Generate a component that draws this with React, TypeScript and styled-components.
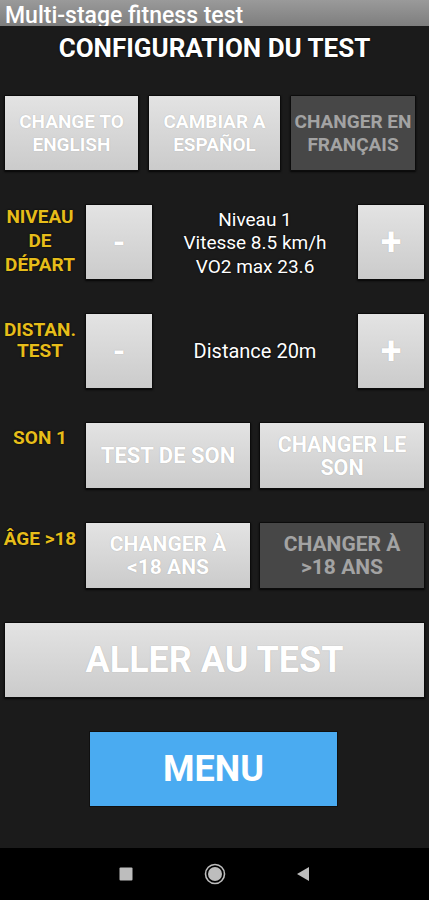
import styled, { createGlobalStyle } from "styled-components";

const GlobalStyle = createGlobalStyle`
  html, body {
    margin: 0;
    padding: 0;
    background: #1b1b1b;
  }
  body {
    font-family: Roboto, "Liberation Sans", sans-serif;
  }
`;

const Screen = styled.div`
  width: 429px;
  height: 900px;
  display: flex;
  flex-direction: column;
  background: #1b1b1b;
  overflow: hidden;
`;

const TitleBar = styled.div`
  height: 26px;
  flex: none;
  overflow: hidden;
  background: linear-gradient(#9a9a9a, #7e7e7e);
  color: #fff;
  font-size: 23px;
  font-weight: 500;
  line-height: 26px;
  padding: 3px 0 0 5px;
  box-sizing: border-box;
  white-space: nowrap;
`;

const Content = styled.div`
  flex: 1;
  display: flex;
  flex-direction: column;
  gap: 33px;
`;

const Heading = styled.h1`
  margin: 0;
  padding-top: 8px;
  font-size: 26px;
  line-height: 28px;
  font-weight: 700;
  color: #fff;
  text-align: center;
  text-shadow: 0 0 2px #000;
`;

const LangRow = styled.div`
  display: grid;
  grid-template-columns: 135px 133px 126px;
  column-gap: 9px;
  padding-left: 4px;
  height: 76px;
`;

const Btn = styled.button<{ $dim?: boolean; $size?: number }>`
  margin: 0;
  padding: 0 2px;
  border: 1px solid #0c0c0c;
  border-radius: 1px;
  box-shadow: 0 1px 2px rgba(0, 0, 0, 0.8);
  background: ${({ $dim }) =>
    $dim ? "#474747" : "linear-gradient(#e3e3e3, #cbcbcb)"};
  color: ${({ $dim }) => ($dim ? "#a3a3a3" : "#fff")};
  font-family: Roboto, "Liberation Sans", sans-serif;
  font-weight: 700;
  font-size: ${({ $size }) => $size ?? 19}px;
  line-height: 23px;
  text-shadow: ${({ $dim }) => ($dim ? "none" : "0 0 1px rgba(0,0,0,0.25)")};
  display: flex;
  align-items: center;
  justify-content: center;
  text-align: center;
`;

const StepRow = styled.div`
  display: grid;
  grid-template-columns: 85px 68px 1fr 68px;
  padding-right: 4px;
  height: 76px;
`;

const ChoiceRow = styled.div`
  display: grid;
  grid-template-columns: 85px 1fr;
  padding-right: 4px;
  height: 67px;
`;

const Pair = styled.div`
  display: grid;
  grid-template-columns: 1fr 1fr;
  column-gap: 8px;
`;

const Label = styled.div<{ $top: number; $lh: number }>`
  padding: ${({ $top }) => $top}px 5px 0 0;
  color: #e6bd1a;
  font-weight: 700;
  font-size: 19px;
  line-height: ${({ $lh }) => $lh}px;
  text-align: center;
  text-shadow: 0 0 2px #000;
`;

const Info = styled.div<{ $size?: number }>`
  display: flex;
  flex-direction: column;
  align-items: center;
  justify-content: center;
  color: #fff;
  font-size: ${({ $size }) => $size ?? 19}px;
  line-height: 23.5px;
  padding-top: 2px;
  text-shadow: 0 0 2px #000;
`;

const GoBtn = styled(Btn)`
  margin: 0 4px;
  height: 76px;
  font-size: 36px;
`;

const MenuBtn = styled.button`
  align-self: flex-start;
  margin: 0 0 0 89px;
  width: 249px;
  height: 76px;
  border: 1px solid #101010;
  background: #4aabf1;
  color: #fff;
  font-family: Roboto, "Liberation Sans", sans-serif;
  font-weight: 700;
  font-size: 36px;
`;

const NavBar = styled.div`
  height: 52px;
  flex: none;
  background: #000;
  display: flex;
  align-items: center;
  padding-left: 119px;
`;

const NavIcon = styled.svg<{ $gap?: number }>`
  display: block;
  margin-right: ${({ $gap }) => $gap ?? 0}px;
`;

export default function App() {
  return (
    <>
      <GlobalStyle />
      <Screen>
        <TitleBar>Multi-stage fitness test</TitleBar>
        <Content>
          <Heading>CONFIGURATION DU TEST</Heading>
          <LangRow>
            <Btn>CHANGE TO<br />ENGLISH</Btn>
            <Btn>CAMBIAR A<br />ESPAÑOL</Btn>
            <Btn $dim>CHANGER EN<br />FRANÇAIS</Btn>
          </LangRow>
          <StepRow>
            <Label $top={1} $lh={24}>NIVEAU<br />DE<br />DÉPART</Label>
            <Btn $size={32}>-</Btn>
            <Info>
              <span>Niveau 1</span>
              <span>Vitesse 8.5 km/h</span>
              <span>VO2 max 23.6</span>
            </Info>
            <Btn $size={38}>+</Btn>
          </StepRow>
          <StepRow>
            <Label $top={6} $lh={21}>DISTAN.<br />TEST</Label>
            <Btn $size={32}>-</Btn>
            <Info $size={20}>Distance 20m</Info>
            <Btn $size={38}>+</Btn>
          </StepRow>
          <ChoiceRow>
            <Label $top={5} $lh={21}>SON 1</Label>
            <Pair>
              <Btn $size={22}>TEST DE SON</Btn>
              <Btn $size={21.5}>CHANGER LE<br />SON</Btn>
            </Pair>
          </ChoiceRow>
          <ChoiceRow>
            <Label $top={6} $lh={21}>ÂGE &gt;18</Label>
            <Pair>
              <Btn $size={21}>CHANGER À<br />&lt;18 ANS</Btn>
              <Btn $dim $size={21}>CHANGER À<br />&gt;18 ANS</Btn>
            </Pair>
          </ChoiceRow>
          <GoBtn>ALLER AU TEST</GoBtn>
          <MenuBtn>MENU</MenuBtn>
        </Content>
        <NavBar>
          <NavIcon $gap={71} width="14" height="14" viewBox="0 0 14 14">
            <rect x="0.5" y="0.5" width="13" height="13" rx="1" fill="#bdbdbd" />
          </NavIcon>
          <NavIcon $gap={70} width="22" height="22" viewBox="0 0 22 22">
            <circle cx="11" cy="11" r="9.5" fill="none" stroke="#bdbdbd" strokeWidth="1.6" />
            <circle cx="11" cy="11" r="7" fill="#bdbdbd" />
          </NavIcon>
          <NavIcon width="14" height="16" viewBox="0 0 14 16">
            <path d="M13 1 L13 15 L1 8 Z" fill="#bdbdbd" />
          </NavIcon>
        </NavBar>
      </Screen>
    </>
  );
}
